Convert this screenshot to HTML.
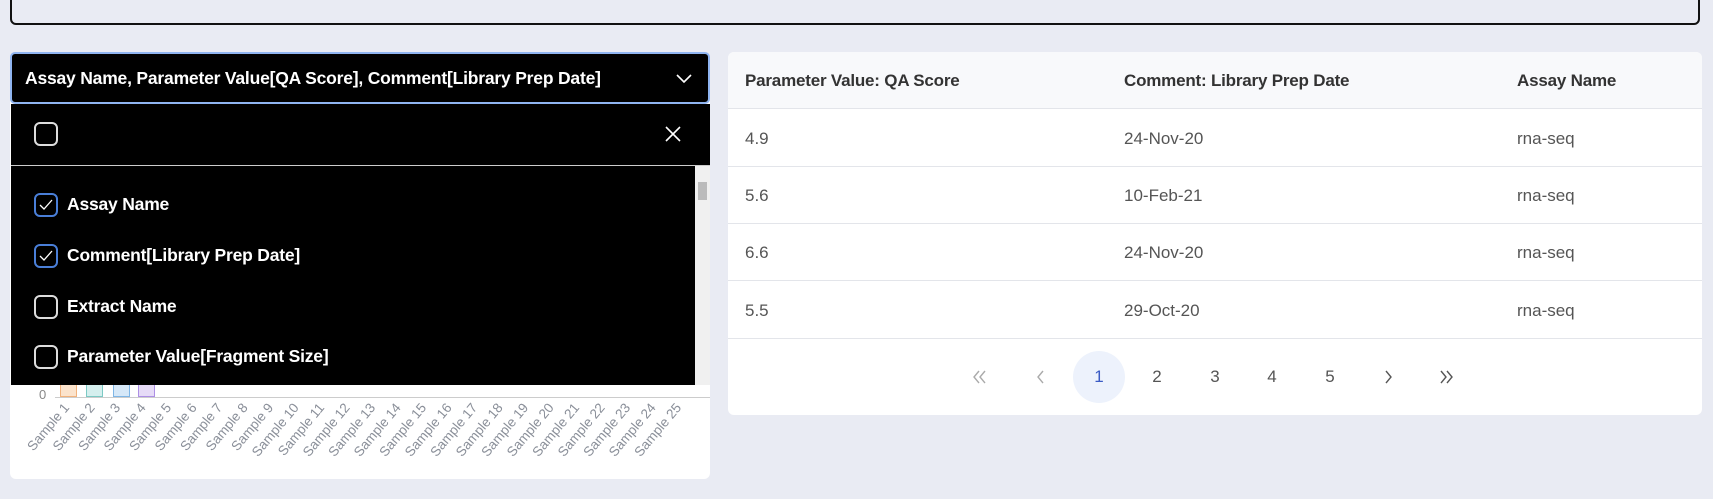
<!DOCTYPE html>
<html><head><meta charset="utf-8"><style>
*{box-sizing:border-box;margin:0;padding:0}
body{width:1713px;height:499px;background:#e9ebf3;font-family:"Liberation Sans",sans-serif;position:relative;overflow:hidden}
.top{position:absolute;left:10px;top:-20px;width:1690px;height:45px;border:2px solid #111;border-radius:6px}
.lp{position:absolute;left:10px;top:52px;width:700px;height:427px;background:#fff;border-radius:6px}
.sel{position:absolute;left:10px;top:52px;width:700px;height:52px;background:#000;border:2px solid #8fb4f0;border-radius:5px;color:#fff;font-weight:bold;font-size:17.5px;line-height:48px;padding-left:13px;letter-spacing:-0.2px}
.dd{position:absolute;left:11px;top:104px;width:699px;height:281px;background:#000}
.cb{position:absolute;width:24px;height:24px;border:2px solid #ddd;border-radius:6px}
.cb.on{border-color:#4a7fd8}
.lbl{position:absolute;left:56px;color:#fff;font-weight:bold;font-size:17.5px;letter-spacing:-0.2px}
.rp{position:absolute;left:728px;top:52px;width:974px;height:363px;background:#fff;border-radius:6px;overflow:hidden}
.row{position:absolute;left:0;width:974px;border-bottom:1px solid #e3e5ea}
.c{position:absolute;font-size:17px;color:#555}
.h{color:#333;font-weight:bold;letter-spacing:-0.2px}
.pg{position:absolute;top:377px;transform:translate(-50%,-50%);font-size:17px;color:#555}
</style></head><body>
<div class="top"></div>
<div class="lp">
 <div style="position:absolute;left:50px;top:330px;width:17px;height:15px;background:#fbe3cc;border:1px solid #f1b27c"></div>
 <div style="position:absolute;left:76px;top:330px;width:17px;height:15px;background:#d5efee;border:1px solid #7cc9c4"></div>
 <div style="position:absolute;left:103px;top:330px;width:17px;height:15px;background:#d6e8f8;border:1px solid #7fb6e6"></div>
 <div style="position:absolute;left:128px;top:330px;width:17px;height:15px;background:#e6dbf7;border:1px solid #ad8fe5"></div>
 <div style="position:absolute;left:29px;top:335px;font-size:13px;color:#888">0</div>
 <div style="position:absolute;left:45px;top:345px;width:655px;height:1px;background:#ccc"></div>
 <svg width="700" height="427" style="position:absolute;left:0;top:0" font-family="Liberation Sans" font-size="13.5" fill="#8a8f99">
 <text transform="translate(60,356) rotate(-50)" text-anchor="end">Sample 1</text><text transform="translate(85.5,356) rotate(-50)" text-anchor="end">Sample 2</text><text transform="translate(111,356) rotate(-50)" text-anchor="end">Sample 3</text><text transform="translate(136.5,356) rotate(-50)" text-anchor="end">Sample 4</text><text transform="translate(162,356) rotate(-50)" text-anchor="end">Sample 5</text><text transform="translate(187.5,356) rotate(-50)" text-anchor="end">Sample 6</text><text transform="translate(213,356) rotate(-50)" text-anchor="end">Sample 7</text><text transform="translate(238.5,356) rotate(-50)" text-anchor="end">Sample 8</text><text transform="translate(264,356) rotate(-50)" text-anchor="end">Sample 9</text><text transform="translate(289.5,356) rotate(-50)" text-anchor="end">Sample 10</text><text transform="translate(315,356) rotate(-50)" text-anchor="end">Sample 11</text><text transform="translate(340.5,356) rotate(-50)" text-anchor="end">Sample 12</text><text transform="translate(366,356) rotate(-50)" text-anchor="end">Sample 13</text><text transform="translate(391.5,356) rotate(-50)" text-anchor="end">Sample 14</text><text transform="translate(417,356) rotate(-50)" text-anchor="end">Sample 15</text><text transform="translate(442.5,356) rotate(-50)" text-anchor="end">Sample 16</text><text transform="translate(468,356) rotate(-50)" text-anchor="end">Sample 17</text><text transform="translate(493.5,356) rotate(-50)" text-anchor="end">Sample 18</text><text transform="translate(519,356) rotate(-50)" text-anchor="end">Sample 19</text><text transform="translate(544.5,356) rotate(-50)" text-anchor="end">Sample 20</text><text transform="translate(570,356) rotate(-50)" text-anchor="end">Sample 21</text><text transform="translate(595.5,356) rotate(-50)" text-anchor="end">Sample 22</text><text transform="translate(621,356) rotate(-50)" text-anchor="end">Sample 23</text><text transform="translate(646.5,356) rotate(-50)" text-anchor="end">Sample 24</text><text transform="translate(672,356) rotate(-50)" text-anchor="end">Sample 25</text>
 </svg>
</div>
<div class="sel">Assay Name, Parameter Value[QA Score], Comment[Library Prep Date]
 <svg width="16" height="10" style="position:absolute;left:664px;top:20px" fill="none" stroke="#fff" stroke-width="1.6"><path d="M1 1l7 7 7-7"/></svg></div>
<div class="dd">
 <div class="cb" style="left:23px;top:18px"></div>
 <svg width="16" height="16" style="position:absolute;left:654px;top:22px" stroke="#fff" stroke-width="1.6"><path d="M1 1l14 14M15 1L1 15"/></svg>
 <div style="position:absolute;left:0;top:61px;width:699px;height:1px;background:#ccc"></div>
 <div style="position:absolute;left:684px;top:62px;width:15px;height:219px;background:#f0f0f0"></div>
 <div style="position:absolute;left:687px;top:78px;width:9px;height:18px;background:#bbb"></div>
 <div class="cb on" style="left:23px;top:89px"><svg width="20" height="20" style="position:absolute;left:0;top:0" fill="none" stroke="#fff" stroke-width="1.3"><path d="M4 10l4 4 8-9"/></svg></div>
 <div class="lbl" style="top:90px">Assay Name</div>
 <div class="cb on" style="left:23px;top:140px"><svg width="20" height="20" style="position:absolute;left:0;top:0" fill="none" stroke="#fff" stroke-width="1.3"><path d="M4 10l4 4 8-9"/></svg></div>
 <div class="lbl" style="top:141px">Comment[Library Prep Date]</div>
 <div class="cb" style="left:23px;top:191px"></div>
 <div class="lbl" style="top:192px">Extract Name</div>
 <div class="cb" style="left:23px;top:241px"></div>
 <div class="lbl" style="top:242px">Parameter Value[Fragment Size]</div>
</div>
<div class="rp">
 <div class="row" style="top:0;height:57px;background:#f8f9fb"></div>
 <div class="row" style="top:57px;height:58px"></div>
 <div class="row" style="top:115px;height:57px"></div>
 <div class="row" style="top:172px;height:57px"></div>
 <div class="row" style="top:229px;height:58px"></div>
 <div class="c h" style="left:17px;top:19px">Parameter Value: QA Score</div>
 <div class="c h" style="left:396px;top:19px">Comment: Library Prep Date</div>
 <div class="c h" style="left:789px;top:19px">Assay Name</div>
 <div class="c" style="left:17px;top:77px">4.9</div><div class="c" style="left:396px;top:77px">24-Nov-20</div><div class="c" style="left:789px;top:77px">rna-seq</div>
 <div class="c" style="left:17px;top:134px">5.6</div><div class="c" style="left:396px;top:134px">10-Feb-21</div><div class="c" style="left:789px;top:134px">rna-seq</div>
 <div class="c" style="left:17px;top:191px">6.6</div><div class="c" style="left:396px;top:191px">24-Nov-20</div><div class="c" style="left:789px;top:191px">rna-seq</div>
 <div class="c" style="left:17px;top:249px">5.5</div><div class="c" style="left:396px;top:249px">29-Oct-20</div><div class="c" style="left:789px;top:249px">rna-seq</div>
</div>
<div style="position:absolute;left:1073px;top:351px;width:52px;height:52px;border-radius:50%;background:#edf2fc"></div>
<svg width="1713" height="499" style="position:absolute;left:0;top:0" fill="none" stroke-width="1.4">
 <path d="M979 371l-5 6 5 6M985 371l-5 6 5 6" stroke="#aaa"/>
 <path d="M1043 371l-5 6 5 6" stroke="#aaa"/>
 <path d="M1386 371l5 6-5 6" stroke="#555"/>
 <path d="M1441 371l5 6-5 6M1447 371l5 6-5 6" stroke="#555"/>
</svg>
<div class="pg" style="left:1099px;color:#3b5bc4">1</div>
<div class="pg" style="left:1157px">2</div>
<div class="pg" style="left:1215px">3</div>
<div class="pg" style="left:1272px">4</div>
<div class="pg" style="left:1330px">5</div>
</body></html>
